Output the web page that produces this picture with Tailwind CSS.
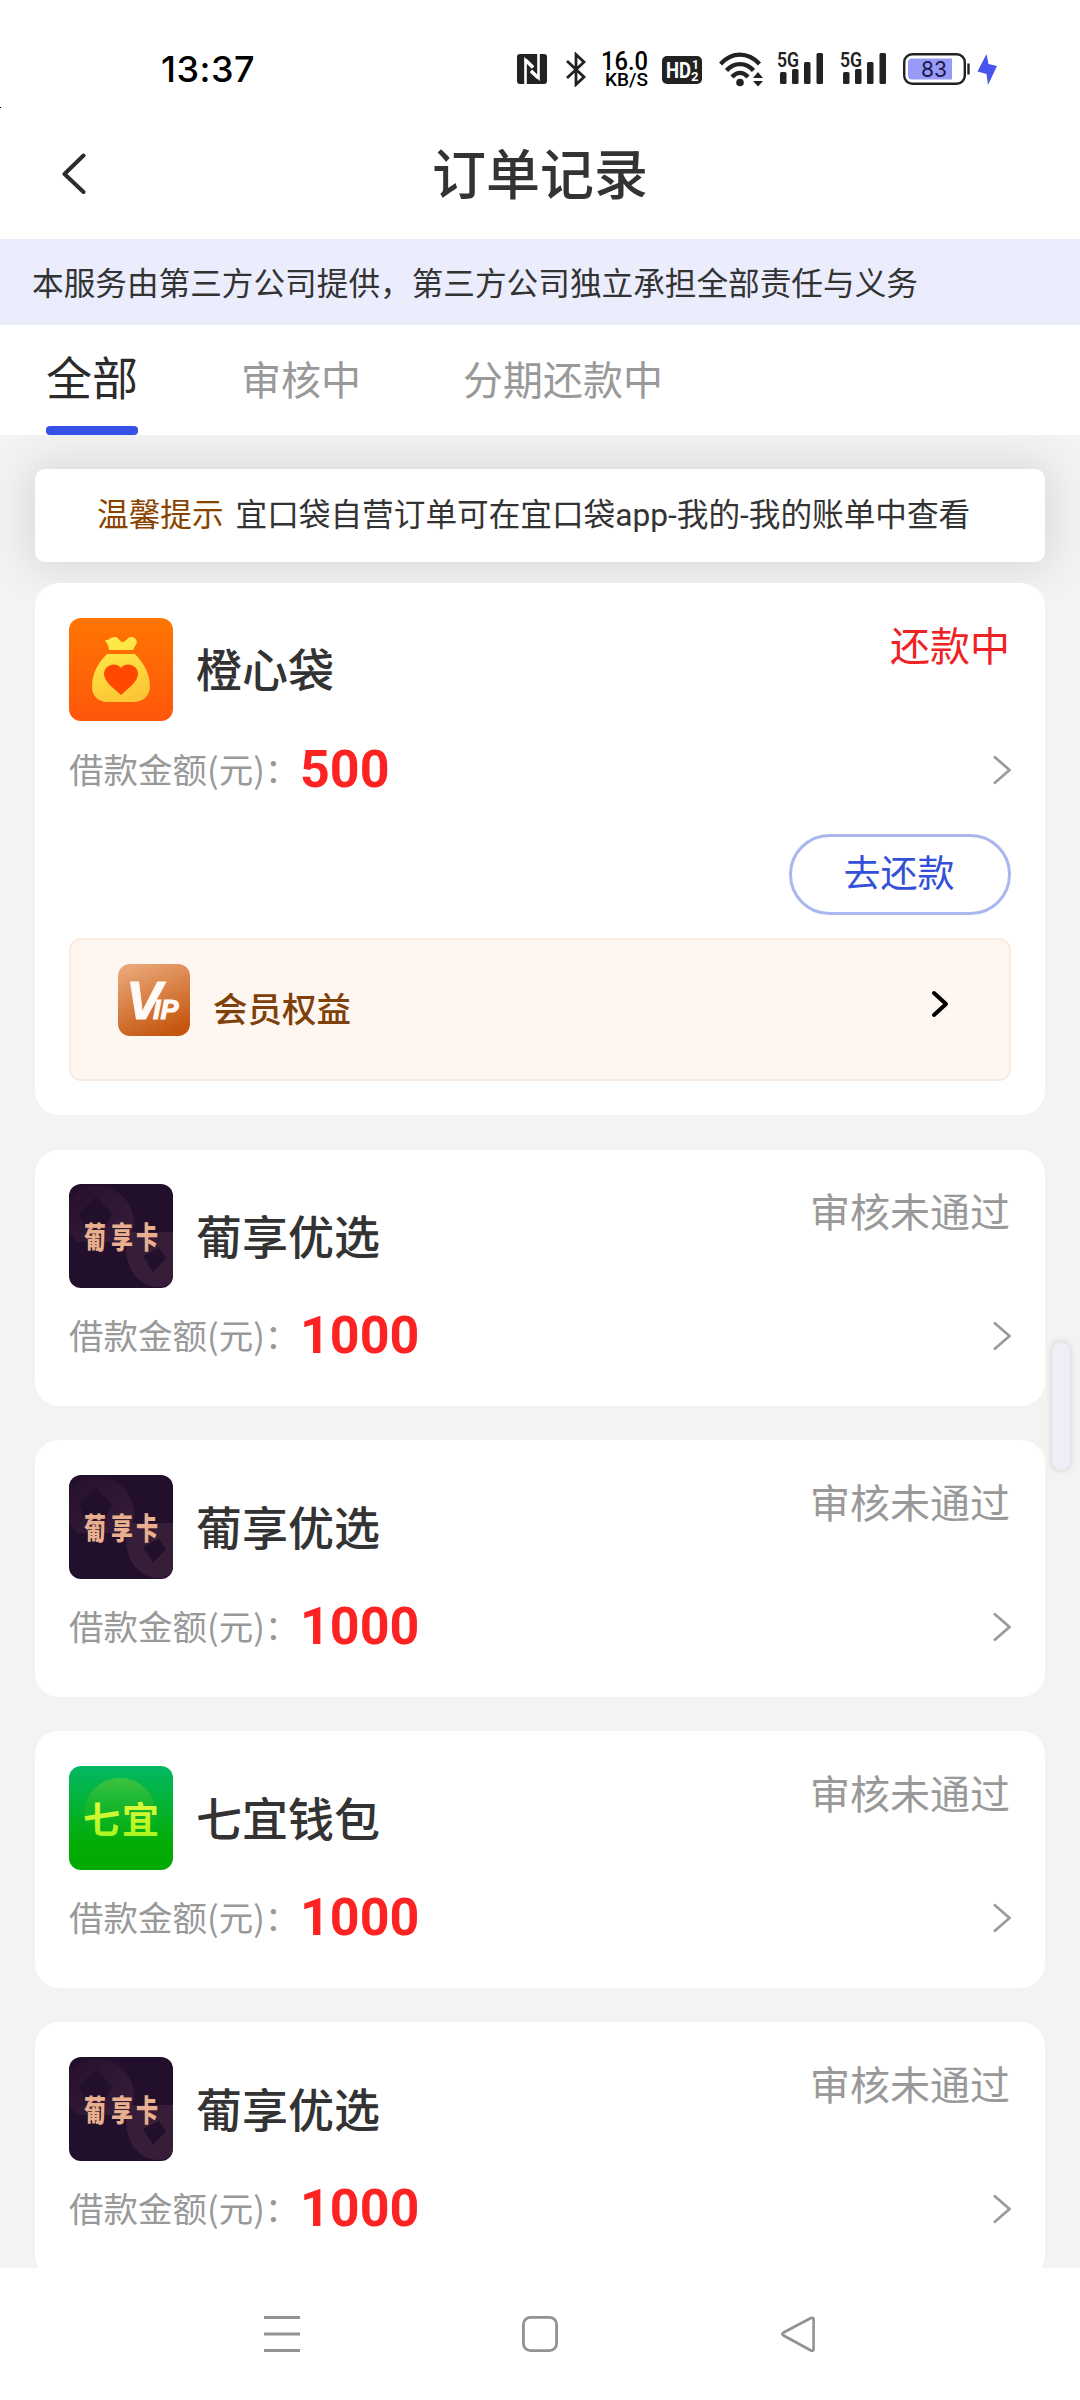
<!DOCTYPE html>
<html lang="zh-CN">
<head>
<meta charset="utf-8">
<title>订单记录</title>
<script src="https://cdn.jsdelivr.net/npm/@tailwindcss/browser@4"></script>
</head>
<body class="bg-white">
<svg class="absolute h-0 w-0">
  <defs>
    <linearGradient id="orange" x1="0" y1="0" x2="0" y2="1"><stop offset="0" stop-color="#ff7602"/><stop offset="1" stop-color="#ff560b"/></linearGradient>
    <linearGradient id="gold" x1="0.2" y1="0" x2="0.5" y2="1"><stop offset="0" stop-color="#fff04a"/><stop offset="1" stop-color="#fcc535"/></linearGradient>
    <linearGradient id="green" x1="0" y1="0" x2="0" y2="1"><stop offset="0" stop-color="#04b862"/><stop offset=".75" stop-color="#02ac05"/><stop offset="1" stop-color="#02a902"/></linearGradient>
    <linearGradient id="glow" x1="0" y1="0" x2="0" y2="1"><stop offset="0" stop-color="#3cc240"/><stop offset="1" stop-color="#02ac05" stop-opacity="0"/></linearGradient>
    <linearGradient id="lime" x1="0" y1="0" x2="0" y2="1"><stop offset="0" stop-color="#f4fb45"/><stop offset="1" stop-color="#9cf516"/></linearGradient>
    <linearGradient id="copper" x1="0.2" y1="0" x2="0.6" y2="1"><stop offset="0" stop-color="#eaa878"/><stop offset="1" stop-color="#c55610"/></linearGradient>
    <linearGradient id="ringA" x1="0" y1="0" x2="1" y2="1"><stop offset="0" stop-color="#26102c"/><stop offset="1" stop-color="#3e2340"/></linearGradient>
  </defs>
</svg>
<svg class="hidden">
  <symbol id="chevron" viewBox="0 0 18 30"><path d="M1 1.5 16.500 15 1 28.5" fill="none" stroke="#9b9b9b" stroke-width="2.8"/></symbol>
  <symbol id="logo-px" viewBox="0 0 104 104">
    <rect width="104" height="104" rx="12" fill="#220f2b"/>
    <path fill-rule="evenodd" d="M0 15C8 5 20 1 32 2c20 3 33 19 33 36 0 8-3 14-7 20H8L0 48ZM27 12 10 29l5 13h22l6-12Z" fill="url(#ringA)" opacity=".75"/>
    <path fill-rule="evenodd" d="M57 63c0 24 14 40 33 40h2a12 12 0 0 0 12-11V48H62q-5 6-5 15ZM74 72l10 16 13-14-7-10Z" fill="#3a203b" opacity=".85"/>
    <g fill="#e9b08f" transform="translate(15 64) scale(1 1.34)"><text font-family="Noto Sans CJK SC, sans-serif" font-weight="900" font-size="22" x="0 27 52" y="0">葡享卡</text></g>
  </symbol>
  <symbol id="signal" viewBox="0 0 48 34">
    <text x="0" y="15.500" font-family="Roboto, sans-serif" font-weight="600" font-size="20" textLength="22" lengthAdjust="spacingAndGlyphs" fill="#222">5G</text>
    <g fill="#222"><rect x="3" y="21" width="6.500" height="12" rx="1.5"/><rect x="15" y="18" width="6.500" height="15" rx="1.5"/><rect x="27" y="11" width="6.500" height="22" rx="1.5"/><rect x="39.500" y="2" width="6.500" height="31" rx="1.5"/></g>
  </symbol>
</svg>

<div class="relative flex h-[2400px] w-[1080px] flex-col overflow-hidden bg-white font-['Noto_Sans_CJK_SC',sans-serif] text-[#333333]">
  <i class="absolute top-[107px] left-0 h-px w-px bg-black"></i>

  <!-- status bar -->
  <div class="flex h-[104px] shrink-0 items-start pt-[51px]">
    <div class="ml-[161px] w-[356px] font-[Inter,sans-serif] text-[36px] leading-[36px] font-medium tracking-[0.5px] text-black">13:37</div>
    <svg class="mt-[3px] shrink-0" width="30" height="30" viewBox="0 0 30 30"><rect width="30" height="30" rx="3" fill="#222"/><path d="M8.500 30V6L16 13M21.500 0v24L14 17" fill="none" stroke="#fff" stroke-width="2.600"/><path d="M8.500 6 16 13.500M21.500 24 14 17" stroke="#fff" stroke-width="3.500"/></svg>
    <svg class="mt-px ml-[18px] shrink-0" width="23" height="35" viewBox="0 0 23 35"><path d="M2 9 19 25 11 32.500V2.500L19 10 2 26" fill="none" stroke="#222" stroke-width="2.800"/></svg>
    <svg class="ml-[13px] shrink-0" width="48" height="38" viewBox="0 0 48 38"><g font-family="Roboto, sans-serif" fill="#000" font-weight="500"><text x="0" y="19" font-size="25" textLength="47" lengthAdjust="spacingAndGlyphs">16.0</text><text x="4" y="35" font-size="18.500" textLength="43" lengthAdjust="spacingAndGlyphs">KB/S</text></g></svg>
    <svg class="mt-[5px] ml-[13px] shrink-0" width="41" height="29" viewBox="0 0 41 29"><rect width="40" height="28" rx="5" fill="#222"/><g fill="#fff" font-family="Roboto, sans-serif" font-weight="700"><text x="4" y="22" font-size="22" textLength="25" lengthAdjust="spacingAndGlyphs">HD</text><text x="30" y="13" font-size="12">1</text><text x="29" y="25" font-size="13">2</text></g></svg>
    <svg class="mt-[1px] ml-[16px] shrink-0" width="46" height="35" viewBox="0 0 46 35"><g fill="none" stroke="#222" stroke-width="4.400"><path d="M1.500 12C13-0.500 29-0.500 40.500 12"/><path d="M7.500 18.500C15 10 27 10 34.500 18.500"/><path d="M13 25c5-5.500 11-5.500 16 0"/></g><circle cx="21" cy="30.500" r="3.800" fill="#222"/><path d="m34 26 5-6 5 6ZM34 29h10l-5 5.500Z" fill="#222"/></svg>
    <svg class="ml-[12px] shrink-0" width="48" height="34"><use href="#signal"/></svg>
    <svg class="ml-[15px] shrink-0" width="48" height="34"><use href="#signal"/></svg>
    <svg class="mt-[2px] ml-[15px] shrink-0" width="68" height="32" viewBox="0 0 68 32"><rect x="1.200" y="1.200" width="60.600" height="29.600" rx="8" fill="#fff" stroke="#222" stroke-width="2.400"/><path d="M9 5.500h40v21H9a4 4 0 0 1-4-4v-13a4 4 0 0 1 4-4Z" fill="#979af6"/><path d="M65.500 10.500v11" stroke="#222" stroke-width="2.400"/><text x="18" y="23.500" font-family="Inter, sans-serif" font-size="22" font-weight="400" textLength="26" lengthAdjust="spacingAndGlyphs" fill="#1a1a4e">83</text></svg>
    <svg class="mt-[3px] ml-[6px] shrink-0" width="21" height="32" viewBox="0 0 21 32"><path d="M9.500 0 0.500 17.500l9 2.500 1.500 11 9-19-8.500-2Z" fill="#4856ee"/></svg>
  </div>

  <!-- header -->
  <header class="grid h-[135px] shrink-0 grid-cols-[1fr_auto_1fr] items-center">
    <svg class="mt-[5px] ml-[61px]" width="26" height="42" viewBox="0 0 26 42"><path d="M22.500 2.500 3.500 21l19 18" fill="none" stroke="#2c2c2c" stroke-width="4" stroke-linecap="round" stroke-linejoin="round"/></svg>
    <h1 class="text-[54px] leading-[64px] font-medium">订单记录</h1>
    <span></span>
  </header>

  <div class="flex h-[86px] shrink-0 items-center bg-[#ebedfd] pl-[32px] text-[31.65px] leading-none">本服务由第三方公司提供，第三方公司独立承担全部责任与义务</div>

  <nav class="flex h-[110px] shrink-0 items-stretch pl-[46px] text-[40px] text-[#999999]">
    <div class="flex w-[92px] flex-col justify-between pt-[25px] text-[46px] leading-[50px] text-[#2b2b2b]">
      <span>全部</span><i class="h-[9px] rounded-[4px] bg-[#3551e6]"></i>
    </div>
    <span class="ml-[103px] pt-[27px] leading-[52px]">审核中</span>
    <span class="ml-[102px] pt-[27px] leading-[52px]">分期还款中</span>
  </nav>

  <main class="flex h-[1833px] shrink-0 flex-col overflow-hidden bg-[#f3f3f3] px-[35px] pt-[34px]">
    <div class="flex h-[93px] shrink-0 items-center gap-[12px] rounded-[10px] bg-white pl-[62px] font-[Roboto,'Noto_Sans_CJK_SC',sans-serif] text-[31.65px] leading-none shadow-[0_0_40px_8px_rgba(0,0,0,0.10)]">
      <span class="text-[#8a4400]">温馨提示</span><span>宜口袋自营订单可在宜口袋app-我的-我的账单中查看</span>
    </div>

    <section class="z-10 mt-[21px] flex h-[532px] shrink-0 flex-col rounded-[24px] bg-white px-[34px] pt-[35px]">
      <div class="flex items-start">
        <svg width="104" height="104" viewBox="0 0 104 104"><rect width="104" height="103" rx="12" fill="url(#orange)"/><path d="M36 22c4 1 5-3 10-3 4 0 4 5 8 5 3 0 4-5 9-5 5 1 6 6 3 9l-2 4H40c0-5-2-6-4-10ZM38 36h28c8 8 15 20 15 32 0 10-7 15-15 16H37c-8-1-14-6-14-15 0-14 6-24 15-33Z" fill="url(#gold)"/><path d="M52 77C43 69 35 63 35 56c0-9 12-13 17-6 5-7 17-3 17 6 0 7-8 13-17 21Z" fill="#ff4800"/></svg>
        <h2 class="ml-[23px] pt-[23px] text-[46px] leading-[52px] font-medium">橙心袋</h2>
        <span class="mr-px ml-auto pt-px text-[40px] leading-[50px] text-[#ee2222]">还款中</span>
      </div>
      <div class="mt-[15px] flex h-[66px] items-center">
        <span class="w-[231px] pb-[4px] text-[34.5px] leading-none whitespace-nowrap text-[#999999]">借款金额(元)：</span>
        <b class="font-[Roboto,sans-serif] text-[52px] leading-none font-bold text-[#fd2323]">500</b>
        <svg class="ml-auto" width="18" height="30"><use href="#chevron"/></svg>
      </div>
      <button class="mt-[31px] flex h-[81px] w-[222px] items-center justify-center self-end rounded-full border-[3px] border-[#abb7ee] pr-[2px] pb-[7px] text-[37px] leading-none text-[#3450d8]">去还款</button>
      <div class="mt-[23px] flex h-[143px] items-center rounded-[12px] border-2 border-[#faebe1] bg-[#fef6f0] pl-[47px]">
        <svg class="mb-[19px]" width="72" height="72" viewBox="0 0 72 72"><rect width="72" height="72" rx="12" fill="url(#copper)"/><text x="8" y="55" fill="#fffaf5" stroke="#fffaf5" stroke-width="1" font-family="Liberation Sans, sans-serif" font-weight="700" font-style="italic" font-size="54">V<tspan font-size="27" dx="-9">IP</tspan></text></svg>
        <span class="mb-[4px] ml-[23px] text-[34.5px] leading-none font-medium text-[#7f400a]">会员权益</span>
        <svg class="mr-[59px] mb-[11px] ml-auto" width="19" height="28" viewBox="0 0 19 28"><path d="M3 3l12 11L3 25" fill="none" stroke="#000" stroke-width="4" stroke-linecap="round" stroke-linejoin="round"/></svg>
      </div>
    </section>

    <section class="mt-[35px] h-[256px] shrink-0 rounded-[24px] bg-white px-[34px] pt-[34px]">
      <div class="flex items-start">
        <svg width="104" height="104"><use href="#logo-px"/></svg>
        <h2 class="ml-[23px] pt-[24px] text-[46px] leading-[52px] font-medium">葡享优选</h2>
        <span class="mr-px ml-auto pt-px text-[40px] leading-[50px] text-[#999999]">审核未通过</span>
      </div>
      <div class="mt-[15px] flex h-[66px] items-center">
        <span class="w-[231px] pb-[4px] text-[34.5px] leading-none whitespace-nowrap text-[#999999]">借款金额(元)：</span>
        <b class="font-[Roboto,sans-serif] text-[52px] leading-none font-bold text-[#fd2323]">1000</b>
        <svg class="ml-auto" width="18" height="30"><use href="#chevron"/></svg>
      </div>
    </section>

    <section class="mt-[34px] h-[257px] shrink-0 rounded-[24px] bg-white px-[34px] pt-[35px]">
      <div class="flex items-start">
        <svg width="104" height="104"><use href="#logo-px"/></svg>
        <h2 class="ml-[23px] pt-[24px] text-[46px] leading-[52px] font-medium">葡享优选</h2>
        <span class="mr-px ml-auto pt-px text-[40px] leading-[50px] text-[#999999]">审核未通过</span>
      </div>
      <div class="mt-[15px] flex h-[66px] items-center">
        <span class="w-[231px] pb-[4px] text-[34.5px] leading-none whitespace-nowrap text-[#999999]">借款金额(元)：</span>
        <b class="font-[Roboto,sans-serif] text-[52px] leading-none font-bold text-[#fd2323]">1000</b>
        <svg class="ml-auto" width="18" height="30"><use href="#chevron"/></svg>
      </div>
    </section>

    <section class="mt-[34px] h-[257px] shrink-0 rounded-[24px] bg-white px-[34px] pt-[35px]">
      <div class="flex items-start">
        <svg width="104" height="104" viewBox="0 0 104 104"><rect width="104" height="104" rx="12" fill="url(#green)"/><circle cx="51" cy="48" r="36" fill="url(#glow)"/><text x="14" y="68" fill="url(#lime)" font-family="Noto Sans CJK SC, sans-serif" font-weight="700" font-size="37" textLength="76">七宜</text></svg>
        <h2 class="ml-[23px] pt-[24px] text-[46px] leading-[52px] font-medium">七宜钱包</h2>
        <span class="mr-px ml-auto pt-px text-[40px] leading-[50px] text-[#999999]">审核未通过</span>
      </div>
      <div class="mt-[15px] flex h-[66px] items-center">
        <span class="w-[231px] pb-[4px] text-[34.5px] leading-none whitespace-nowrap text-[#999999]">借款金额(元)：</span>
        <b class="font-[Roboto,sans-serif] text-[52px] leading-none font-bold text-[#fd2323]">1000</b>
        <svg class="ml-auto" width="18" height="30"><use href="#chevron"/></svg>
      </div>
    </section>

    <section class="mt-[34px] h-[257px] shrink-0 rounded-[24px] bg-white px-[34px] pt-[35px]">
      <div class="flex items-start">
        <svg width="104" height="104"><use href="#logo-px"/></svg>
        <h2 class="ml-[23px] pt-[24px] text-[46px] leading-[52px] font-medium">葡享优选</h2>
        <span class="mr-px ml-auto pt-px text-[40px] leading-[50px] text-[#999999]">审核未通过</span>
      </div>
      <div class="mt-[15px] flex h-[66px] items-center">
        <span class="w-[231px] pb-[4px] text-[34.5px] leading-none whitespace-nowrap text-[#999999]">借款金额(元)：</span>
        <b class="font-[Roboto,sans-serif] text-[52px] leading-none font-bold text-[#fd2323]">1000</b>
        <svg class="ml-auto" width="18" height="30"><use href="#chevron"/></svg>
      </div>
    </section>
  </main>

  <!-- edge panel handle -->
  <i class="absolute top-[1342px] left-[1052px] z-20 h-[128px] w-[18px] rounded-full bg-[#eeeef6] shadow-[0_0_5px_2px_rgba(0,0,0,0.09)]"></i>

  <!-- system navigation -->
  <footer class="flex flex-1 items-start bg-white pt-[47px]">
    <svg class="ml-[264px]" width="36" height="38" viewBox="0 0 36 38"><path d="M0 2.500h36M0 19h36M0 35.500h36" stroke="#929292" stroke-width="3"/></svg>
    <svg class="ml-[222px]" width="36" height="38" viewBox="0 0 36 38"><rect x="1.400" y="2.400" width="33.200" height="33.200" rx="7" fill="none" stroke="#929292" stroke-width="2.800"/></svg>
    <svg class="ml-[222px]" width="36" height="38" viewBox="0 0 36 38"><path d="M31 3 3.500 17.500q-2.500 1.500 0 3L31 35.500q2.600 1 2.600-1.500V4.500Q33.600 2 31 3Z" fill="none" stroke="#929292" stroke-width="2.600" stroke-linejoin="round"/></svg>
  </footer>
</div>
</body>
</html>
